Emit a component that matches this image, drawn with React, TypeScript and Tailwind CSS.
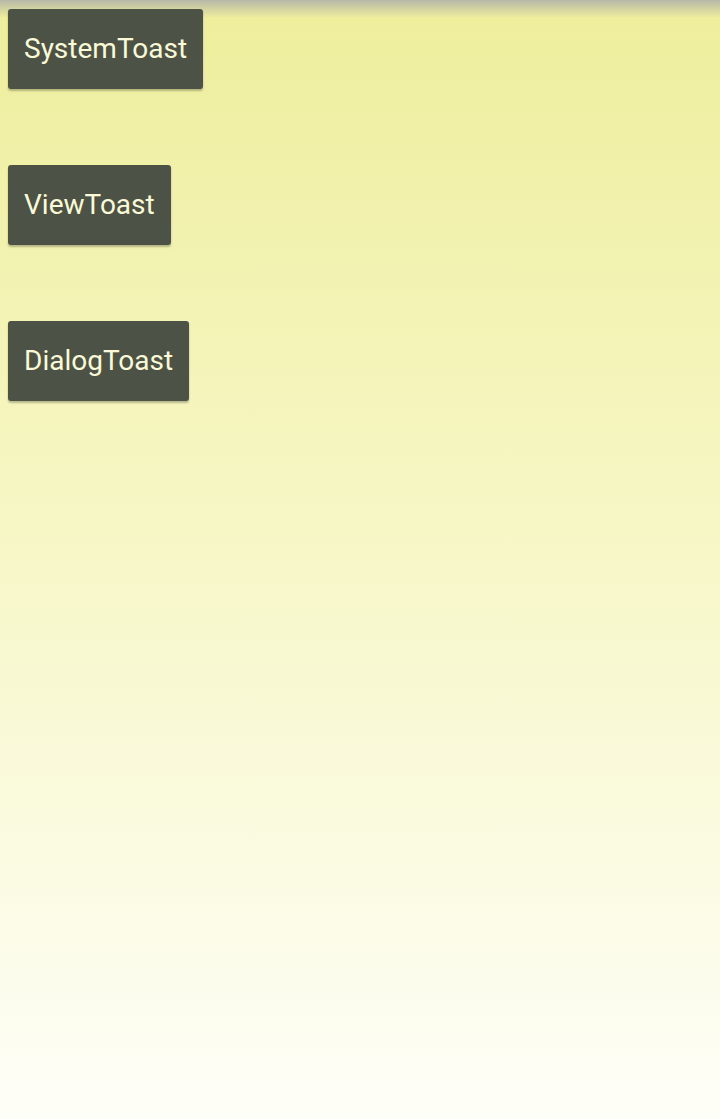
const buttons = ["SystemToast", "ViewToast", "DialogToast"];

export default function App() {
  return (
    <div
      className="relative h-[1119px] w-[720px] bg-gradient-to-b from-[#eeee9c] via-[#f7f7c8] to-[#fefef8]"
      style={{ fontFamily: "Roboto, 'Noto Sans', sans-serif" }}
    >
      {/* status bar shadow */}
      <div className="absolute inset-x-0 top-0 h-[18px] bg-gradient-to-b from-[#b8b8a8] to-transparent" />

      <div className="relative flex flex-col items-start gap-[76px] pl-2 pt-[9px]">
        {buttons.map((label) => (
          <button
            key={label}
            className="h-20 rounded-[3px] bg-[#4c5346] px-4 text-[28px] leading-none text-[#fbf9d6] shadow-[0_2px_2px_rgba(0,0,0,0.25)]"
          >
            {label}
          </button>
        ))}
      </div>
    </div>
  );
}
